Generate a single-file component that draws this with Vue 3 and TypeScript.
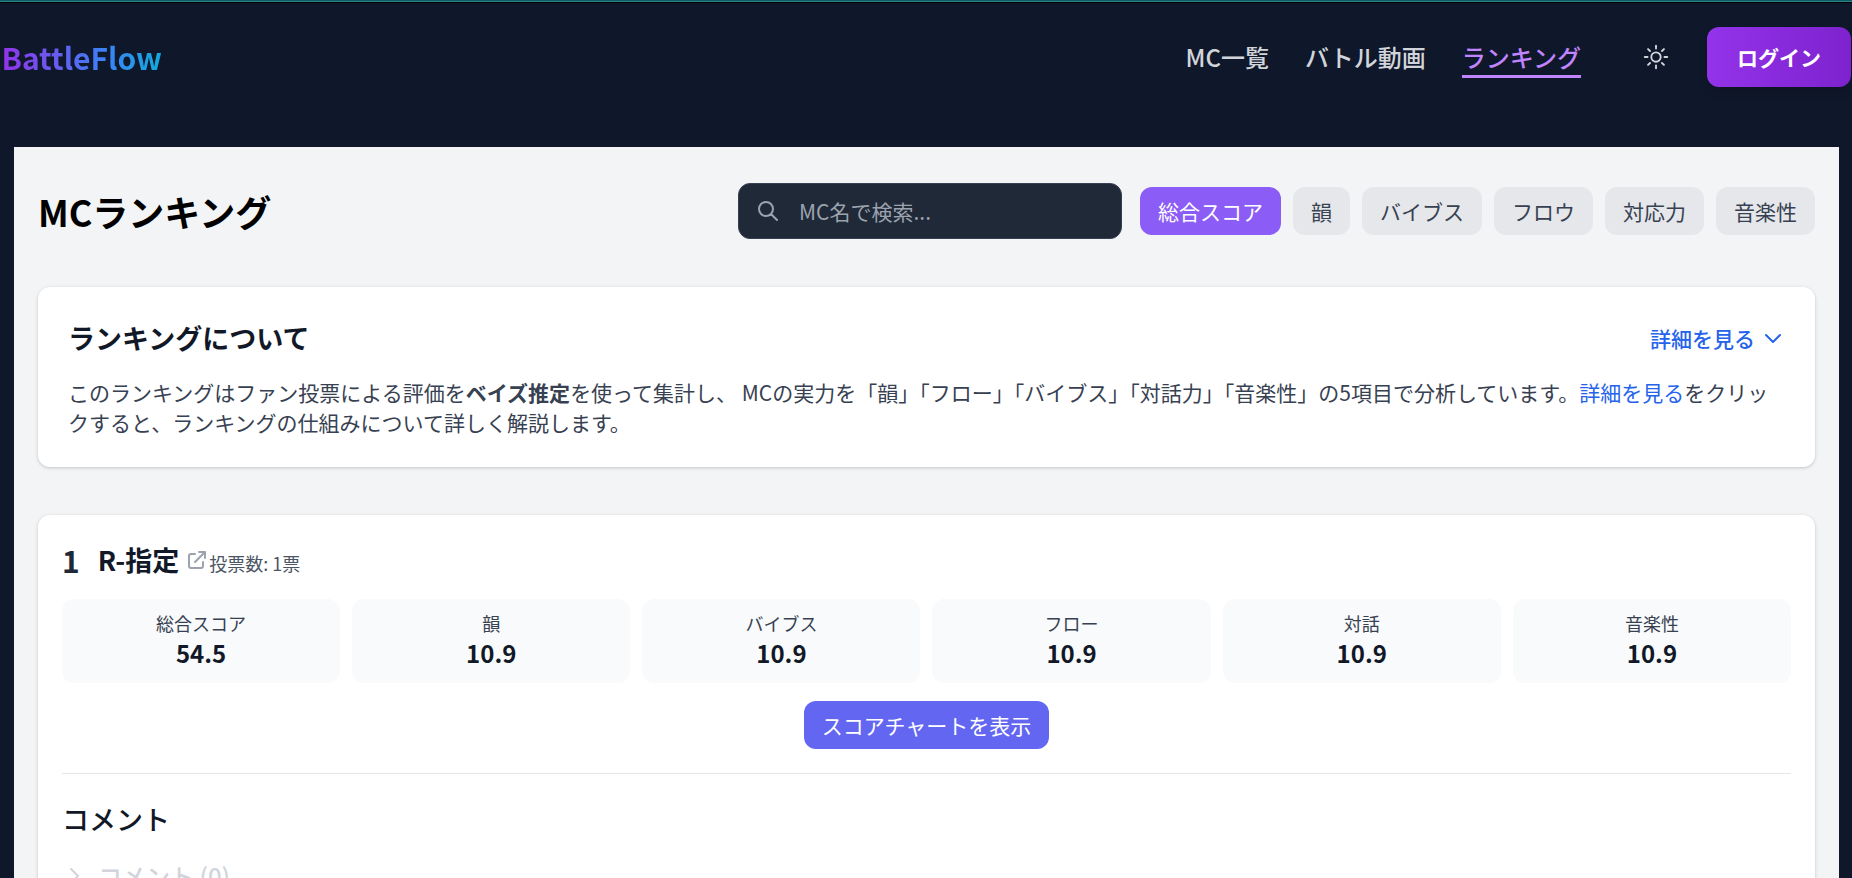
<script setup lang="ts">
import { ref } from 'vue'

const tabs = ['総合スコア', '韻', 'バイブス', 'フロウ', '対応力', '音楽性']
const active = ref('総合スコア')
const query = ref('')
const scores: { label: string; value: string }[] = [
  { label: '総合スコア', value: '54.5' },
  { label: '韻', value: '10.9' },
  { label: 'バイブス', value: '10.9' },
  { label: 'フロー', value: '10.9' },
  { label: '対話', value: '10.9' },
  { label: '音楽性', value: '10.9' },
]
</script>

<template>
  <div class="page">
    <div class="strip"></div>
    <header class="header">
      <div class="brand">BattleFlow</div>
      <nav class="nav">
        <a class="link">MC一覧</a>
        <a class="link">バトル動画</a>
        <a class="link current">ランキング</a>
        <button class="theme" aria-label="theme">
          <svg viewBox="0 0 24 24" width="30" height="30" fill="none" stroke="currentColor" stroke-width="1.5" stroke-linecap="round" stroke-linejoin="round">
            <path d="M12 3v2.25m6.364.386-1.591 1.591M21 12h-2.25m-.386 6.364-1.591-1.591M12 18.75V21m-4.773-4.227-1.591 1.591M5.25 12H3m4.227-4.773L5.636 5.636M15.75 12a3.75 3.75 0 1 1-7.5 0 3.75 3.75 0 0 1 7.5 0Z" />
          </svg>
        </button>
        <button class="login">ログイン</button>
      </nav>
    </header>

    <main class="main">
      <div class="toolbar">
        <h1>MCランキング</h1>
        <label class="search">
          <svg viewBox="0 0 24 24" width="24" height="24" fill="none" stroke="currentColor" stroke-width="2" stroke-linecap="round" stroke-linejoin="round">
            <path d="M21 21l-6-6m2-5a7 7 0 11-14 0 7 7 0 0114 0z" />
          </svg>
          <input v-model="query" type="text" placeholder="MC名で検索..." />
        </label>
        <div class="tabs">
          <button v-for="t in tabs" :key="t" class="tab" :class="{ on: t === active }" @click="active = t">{{ t }}</button>
        </div>
      </div>

      <section class="card about">
        <div class="about-head">
          <h2>ランキングについて</h2>
          <button class="more">
            詳細を見る
            <svg viewBox="0 0 24 24" width="24" height="24" fill="none" stroke="currentColor" stroke-width="2" stroke-linecap="round" stroke-linejoin="round">
              <path d="M19 9l-7 7-7-7" />
            </svg>
          </button>
        </div>
        <p>このランキングはファン投票による評価を<strong>ベイズ推定</strong>を使って集計し、 MCの実力を「韻」「フロー」「バイブス」「対話力」「音楽性」の5項目で分析しています。<a>詳細を見る</a>をクリックすると、ランキングの仕組みについて詳しく解説します。</p>
      </section>

      <section class="card entry">
        <div class="entry-head">
          <span class="rank">1</span>
          <div class="who">
            <span class="name">R-指定</span>
            <svg class="ext" viewBox="0 0 24 24" width="24" height="24" fill="none" stroke="currentColor" stroke-width="2" stroke-linecap="round" stroke-linejoin="round">
              <path d="M10 6H6a2 2 0 00-2 2v10a2 2 0 002 2h10a2 2 0 002-2v-4M14 4h6m0 0v6m0-6L10 14" />
            </svg>
            <span class="votes">投票数: 1票</span>
          </div>
        </div>
        <div class="scores">
          <div v-for="s in scores" :key="s.label" class="score">
            <div class="label">{{ s.label }}</div>
            <div class="value">{{ s.value }}</div>
          </div>
        </div>
        <button class="chart">スコアチャートを表示</button>
        <div class="comments">
          <h3>コメント</h3>
          <div class="toggle">
            <svg viewBox="0 0 24 24" width="24" height="24" fill="none" stroke="currentColor" stroke-width="2" stroke-linecap="round" stroke-linejoin="round">
              <path d="M9 5l7 7-7 7" />
            </svg>
            <span>コメント (0)</span>
          </div>
        </div>
      </section>
    </main>
  </div>
</template>

<style>
html, body { margin: 0; background: #0f172a; overflow: hidden; }
</style>

<style scoped>
.page {
  height: 878px;
  overflow: hidden;
  display: flex;
  flex-direction: column;
  background: #0f172a;
  font-family: "Noto Sans CJK JP", sans-serif;
  font-size: 21px;
  line-height: 30px;
}
* { box-sizing: border-box; }
h1, h2, h3, p { margin: 0; }
button { font: inherit; border: 0; margin: 0; padding: 0; background: none; display: block; white-space: nowrap; }
svg { display: block; flex: none; }
.strip { height: 3px; flex: none; background: linear-gradient(#0b5f63 0 1px, #2f7f86 1px 2px, #000 2px 3px); }
.header { flex: none; height: 144px; padding: 24px 1px 0 1.5px; display: flex; justify-content: space-between; align-items: flex-start; }
.brand {
  height: 60px; line-height: 60px; font-size: 30px; font-weight: 700;
  background: linear-gradient(90deg, #9333ea, #3b82f6 65%, #06b6d4 110%);
  -webkit-background-clip: text; background-clip: text; color: transparent;
}
.nav { display: flex; align-items: center; height: 60px; }
.link { font-size: 24px; font-weight: 500; color: #d1d5db; line-height: 36px; padding: 3px 0 0; margin-right: 36px; border-bottom: 3px solid transparent; }
.current { color: #c084fc; border-bottom-color: #c084fc; margin-right: 60px; }
.theme { color: #d1d5db; margin-right: 36px; }
.login { width: 144px; height: 60px; border-radius: 12px; background: linear-gradient(90deg, #9333ea, #7e22ce); color: #fff; font-weight: 700; box-shadow: 0 6px 9px -1px rgba(0,0,0,.15); }
.main { flex: none; height: 731px; margin: 0 13px 0 14px; padding: 36px 24px 0; background: #f3f4f6; overflow: hidden; }
.toolbar { display: flex; align-items: center; height: 56px; margin-bottom: 48px; }
h1 { font-size: 36px; font-weight: 700; line-height: 48px; color: #000; margin-right: auto; }
.search { width: 384px; height: 56px; display: flex; align-items: center; gap: 19px; padding: 0 17px; margin-right: 18px; border: 1px solid #374151; border-radius: 12px; background: #1f2937; color: #9ca3af; }
.search input { flex: 1; min-width: 0; border: 0; outline: 0; padding: 0; background: none; font: inherit; color: #fff; }
.search input::placeholder { color: #9ca3af; opacity: 1; }
.tabs { display: flex; gap: 12px; }
.tab { height: 48px; padding: 0 18px; border-radius: 12px; background: #e5e7eb; color: #374151; }
.tab.on { background: #8b5cf6; color: #fff; }
.card { background: #fff; border-radius: 12px; box-shadow: 0 1px 4px rgba(0,0,0,.1), 0 1px 3px rgba(0,0,0,.1); }
.about { padding: 30px; height: 180px; margin-bottom: 48px; }
.about-head { display: flex; justify-content: space-between; align-items: center; height: 42px; margin-bottom: 18px; }
h2 { font-size: 27px; line-height: 42px; font-weight: 700; color: #111827; }
.more { display: flex; align-items: center; gap: 6px; color: #2563eb; font-weight: 500; }
.about p { color: #374151; }
.about a { color: #2563eb; }
.entry { height: 500px; padding: 24px; }
.entry-head { display: flex; align-items: flex-start; height: 42px; margin-bottom: 18px; }
.rank { font-size: 30px; line-height: 42px; font-weight: 700; color: #1f2937; margin-right: 18px; }
.who { display: flex; align-items: baseline; line-height: 41px; height: 42px; }
.name { font-size: 27px; font-weight: 700; color: #111827; margin-right: 6px; }
.ext { color: #9ca3af; align-self: center; }
.votes { font-size: 18px; color: #4b5563; }
.scores { display: grid; grid-template-columns: repeat(6, 1fr); gap: 12px; }
.score { height: 84px; padding: 12px; border-radius: 12px; background: #f9fafb; text-align: center; }
.label { font-size: 18px; line-height: 24px; color: #374151; }
.value { font-size: 24px; line-height: 36px; font-weight: 700; color: #111827; }
.chart { height: 48px; padding: 0 18px; margin: 18px auto 24px; border-radius: 12px; background: #6366f1; color: #fff; }
.comments { border-top: 1px solid #e5e7eb; padding-top: 24px; }
h3 { font-size: 27px; line-height: 42px; font-weight: 500; color: #111827; margin-bottom: 18px; }
.toggle { display: flex; align-items: center; gap: 12px; font-size: 24px; line-height: 36px; font-weight: 500; color: #d1d5db; }
</style>
